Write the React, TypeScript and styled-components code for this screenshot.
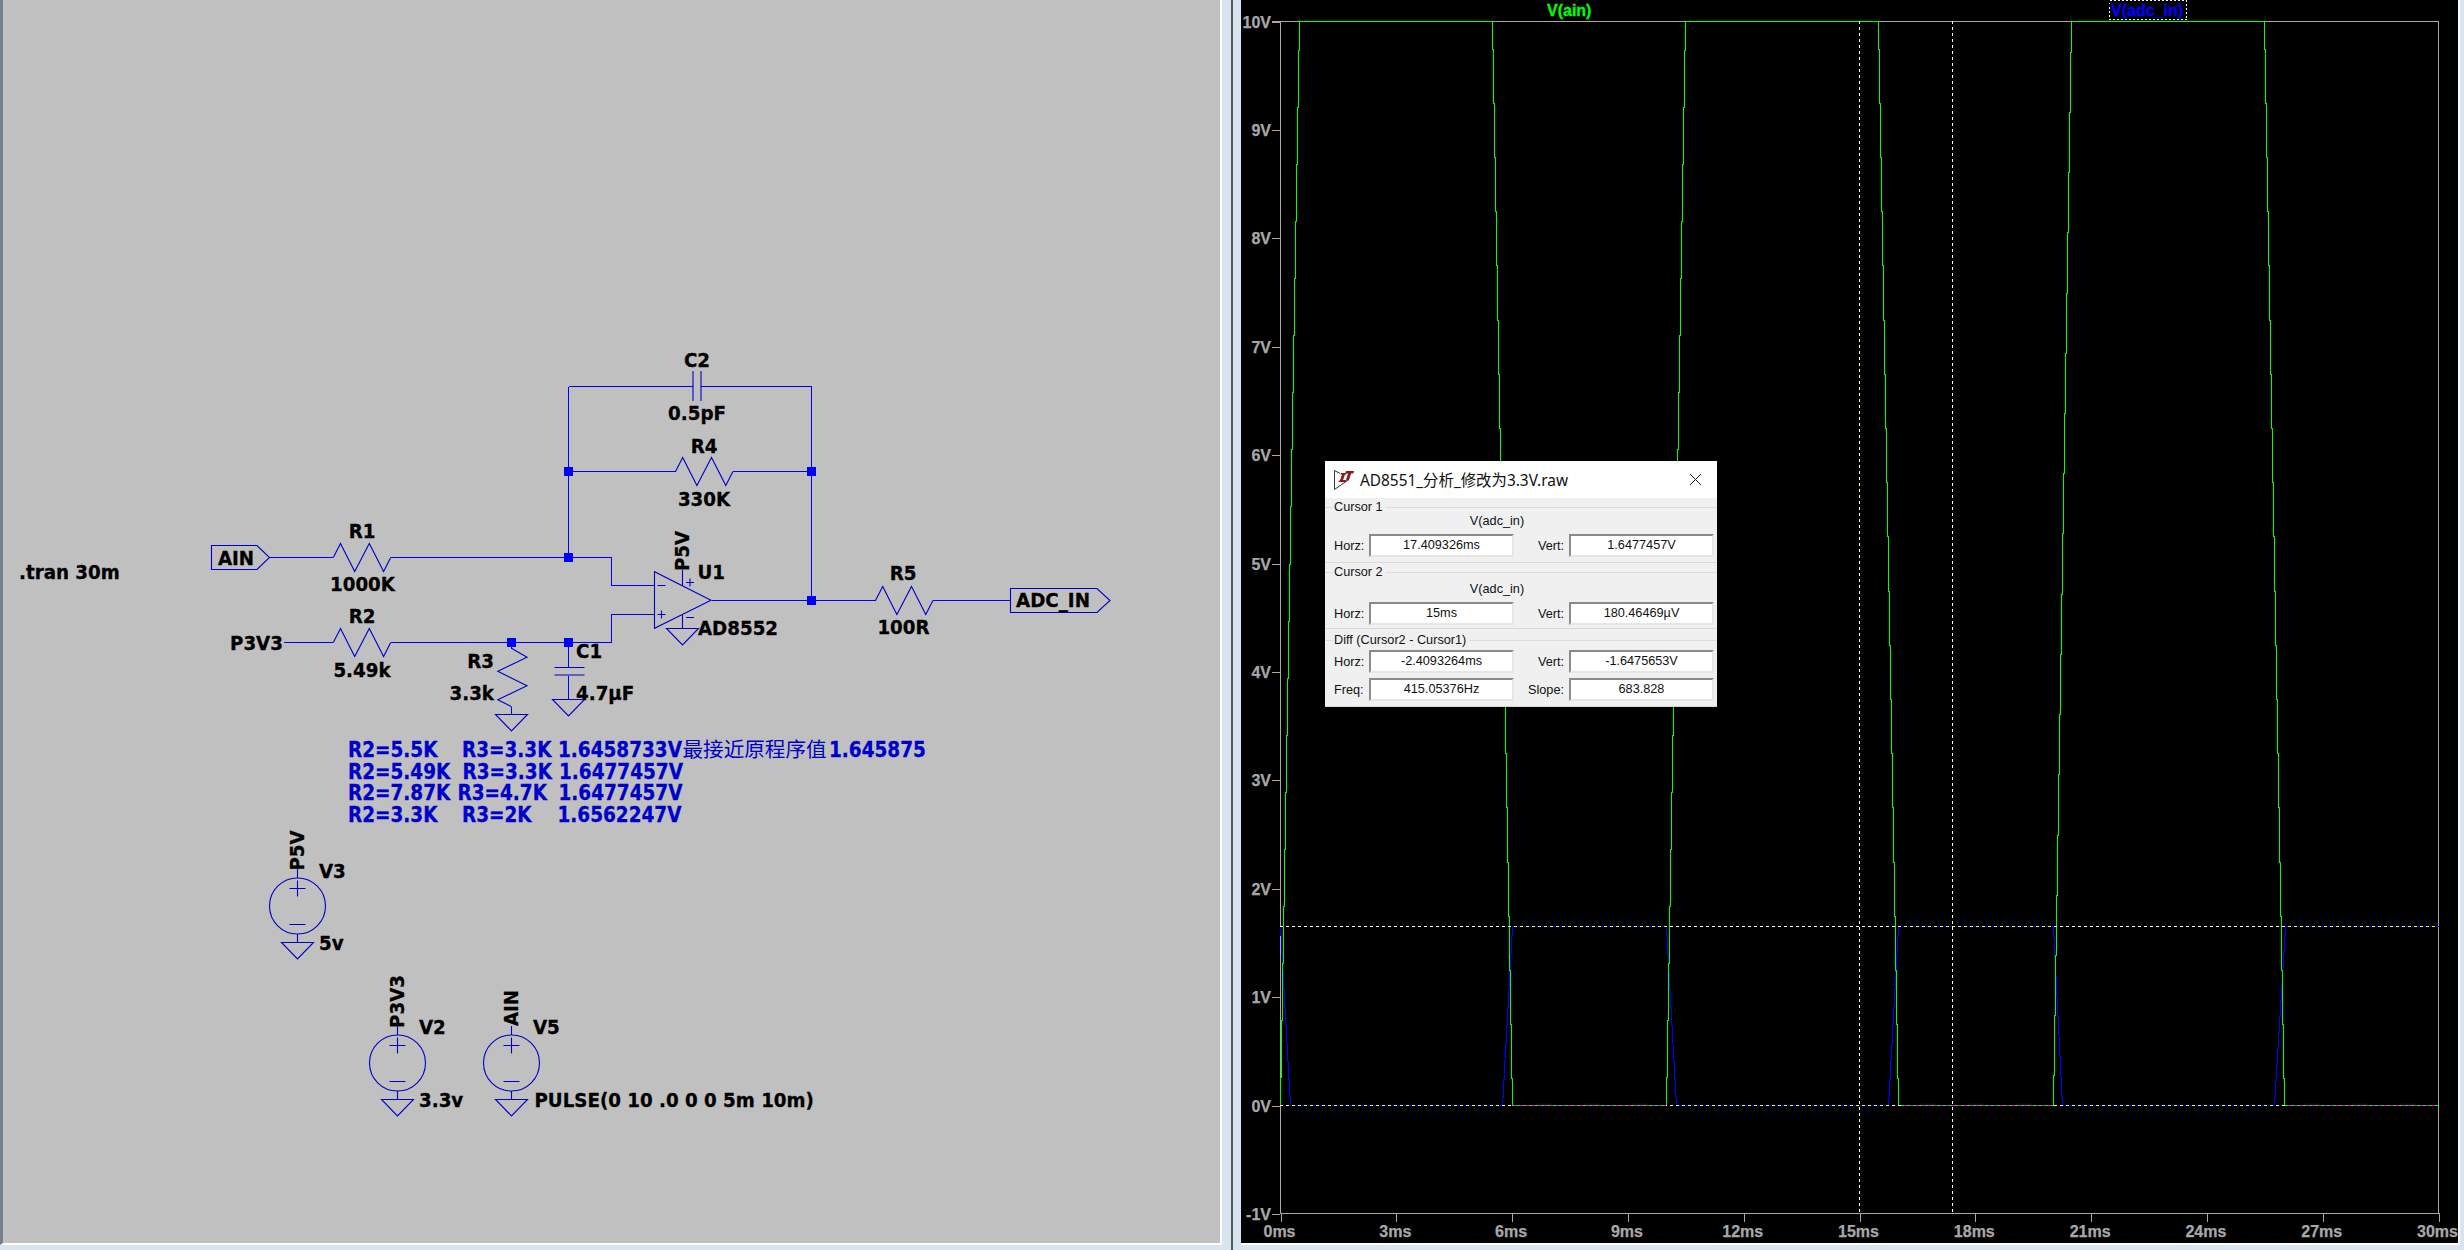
import React from "react";
import styled, { createGlobalStyle } from "styled-components";

const Global = createGlobalStyle`
  html, body { margin: 0; padding: 0; background: #d9e4f1; overflow: hidden; }
  #root { width: 2464px; height: 1250px; }
`;

const Window = styled.div`
  display: flex;
  align-items: flex-start;
  width: 2464px;
  height: 1250px;
  background: #d9e4f1;
`;
const SchematicPane = styled.div`
  box-sizing: border-box;
  width: 1222px;
  height: 1245px;
  background: #c0c0c0;
  border-left: 3px solid #76808c;
  border-right: 2px solid #fff;
  border-bottom: 2px solid #fff;
`;
const Splitter = styled.div`
  display: flex;
  justify-content: center;
  width: 19px;
  height: 1250px;
`;
const SplitLine = styled.div`
  width: 2px;
  height: 100%;
  background: #555;
`;
const PlotPane = styled.div`
  position: relative;
  box-sizing: content-box;
  width: 1217px;
  height: 1243px;
  background: #000;
  border-right: 2px solid #fff;
  border-bottom: 2px solid #fff;
`;
const Canvas = styled.svg`
  display: block;
`;
const Label = styled.text<{ $anchor?: string }>`
  font-family: "DejaVu Sans Condensed", "DejaVu Sans", sans-serif;
  font-stretch: condensed;
  font-weight: 700;
  font-size: 20.3px;
  fill: #000;
  stroke: #000;
  stroke-width: 0.3px;
  text-anchor: ${(p) => p.$anchor || "middle"};
`;
const Note = styled.text`
  font-family: "DejaVu Sans Condensed", "DejaVu Sans", sans-serif;
  font-stretch: condensed;
  font-weight: 700;
  font-size: 20.5px;
  fill: #0000cc;
  stroke: #0000cc;
  stroke-width: 0.3px;
`;
const NoteCjk = styled.text`
  font-family: "Noto Sans CJK SC", sans-serif;
  font-size: 20.6px;
  fill: #0000cc;
`;
const AxisLabel = styled.text<{ $anchor?: string }>`
  font-family: "Liberation Sans", Arial, sans-serif;
  font-weight: 700;
  font-size: 16px;
  fill: #a8a8a8;
  stroke: #a8a8a8;
  stroke-width: 0.25px;
  text-anchor: ${(p) => p.$anchor || "middle"};
`;
const TraceTitle = styled.text<{ $color: string }>`
  font-family: "Liberation Sans", Arial, sans-serif;
  font-weight: 700;
  font-size: 16px;
  fill: ${(p) => p.$color};
  stroke: ${(p) => p.$color};
  stroke-width: 0.3px;
`;
const Wire = styled.path`
  fill: none;
  stroke: #0000ff;
  stroke-width: 1px;
  shape-rendering: crispEdges;
`;
const Part = styled.path`
  fill: none;
  stroke: #0000c8;
  stroke-width: 1.1px;
`;
const SourceBody = styled.circle`
  fill: none;
  stroke: #0000c8;
  stroke-width: 1.1px;
`;
const Junction = styled.rect`
  fill: #0000ff;
`;
const Trace = styled.polyline<{ $color: string }>`
  fill: none;
  stroke: ${(p) => p.$color};
  stroke-width: 1px;
  shape-rendering: crispEdges;
`;
const Axis = styled.path`
  fill: none;
  stroke: #a8a8a8;
  stroke-width: 1px;
  shape-rendering: crispEdges;
`;
const Cursor = styled.path<{ $color: string }>`
  fill: none;
  stroke: ${(p) => p.$color};
  stroke-width: 1px;
  stroke-dasharray: 3 3;
  shape-rendering: crispEdges;
`;
const TraceFrame = styled.rect`
  fill: none;
  stroke: #fff;
  stroke-width: 1px;
  stroke-dasharray: 2 2;
  shape-rendering: crispEdges;
`;

const Dialog = styled.div`
  position: absolute;
  left: 84px;
  top: 461px;
  width: 392px;
  background: #f0f0f0;
  font-family: "Liberation Sans", Arial, sans-serif;
  font-size: 12.7px;
  color: #111;
`;
const TitleBar = styled.div`
  display: flex;
  align-items: center;
  height: 37px;
  padding: 0 15px 0 9px;
  background: #fff;
`;
const TitleText = styled.div`
  margin-left: 6px;
  flex: 1;
  font-family: "Noto Sans", "Noto Sans CJK SC", sans-serif;
  font-size: 15.4px;
  color: #111;
  white-space: nowrap;
`;
const Group = styled.div<{ $top: number; $bottom: number }>`
  padding: ${(p) => p.$top}px 0 ${(p) => p.$bottom}px;
  border-bottom: 1px solid #d8d8d8;
`;
const Legend = styled.div`
  display: flex;
  align-items: center;
  height: 14px;
`;
const LegendRule = styled.div<{ $fixed?: boolean }>`
  height: 1px;
  background: #dcdcdc;
  ${(p) => (p.$fixed ? "width: 8px;" : "flex: 1;")}
`;
const LegendText = styled.span`
  padding: 0 3px 0 1px;
`;
const TraceName = styled.div<{ $top: number }>`
  margin-top: ${(p) => p.$top}px;
  height: 14px;
  line-height: 14px;
  text-align: center;
  padding-right: 48px;
`;
const Row = styled.div<{ $top: number }>`
  display: grid;
  grid-template-columns: 35px 145px 55px 145px;
  align-items: center;
  margin-top: ${(p) => p.$top}px;
  padding-left: 9px;
`;
const FieldLabel = styled.div<{ $right?: boolean }>`
  text-align: ${(p) => (p.$right ? "right" : "left")};
  padding-right: ${(p) => (p.$right ? 5 : 0)}px;
`;
const Field = styled.div`
  box-sizing: border-box;
  height: 23px;
  line-height: 19px;
  background: #fff;
  text-align: center;
  border: 2px solid;
  border-color: #8a8a8a #e6e6e6 #e6e6e6 #8a8a8a;
`;

const X0 = 1280.5;
const PX_MS = (2438.5 - 1280.5) / 30;
const Y0 = 1105.5;
const PX_V = 108.4;
const xms = (m: number) => X0 + m * PX_MS;
const yv = (v: number) => Y0 - v * PX_V;
/* cursor overlays keep the phase of the white dashes, as an XOR pen would */
const phase = (x: number) => 1280 + Math.ceil((x - 1280) / 6) * 6;
const seg = (y: number, spans: [number, number][]) =>
  spans.map(([a, b]) => `M${phase(a)} ${y}H${b}`).join("");

type Pt = [number, number];
const green: Pt[] = [
  [1280.5, 1105.5], [1299.5, 21.5], [1492.5, 21.5], [1512.5, 1105.5], [1666.5, 1105.5],
  [1685.5, 21.5], [1878.5, 21.5], [1898.5, 1105.5], [2053.5, 1105.5], [2071.5, 21.5],
  [2264.5, 21.5], [2284.5, 1105.5], [2438.5, 1105.5],
];
const blue: Pt[] = [
  [1280.5, 926.5], [1290.5, 1105.5], [1502.5, 1105.5], [1512.5, 926.5], [1666.5, 926.5],
  [1676.5, 1105.5], [1888.5, 1105.5], [1898.5, 926.5], [2053.5, 926.5], [2062.5, 1105.5],
  [2274.5, 1105.5], [2285.5, 926.5], [2438.5, 926.5],
];
/* the plot draws its slopes as one-pixel columns with a jog between them */
const stairs = (a: Pt[]) => {
  const out: Pt[] = [a[0]];
  for (let i = 1; i < a.length; i++) {
    const [x0, y0] = a[i - 1];
    const [x1, y1] = a[i];
    if (y0 !== y1) {
      const n = Math.round(x1 - x0);
      for (let k = 1; k <= n; k++) {
        const y = Math.round(y0 + ((y1 - y0) * (k - 0.5)) / n) + 0.5;
        out.push([x0 + k - 1, y], [x0 + k, y]);
      }
    }
    out.push([x1, y1]);
  }
  return out.map((p) => p.join(",")).join(" ");
};

const Resistor = ({ x, y }: { x: number; y: number }) => (
  <Part d={`M${x} ${y}l7.2 -14l14.2 28l14.6 -28l14.3 28l7.1 -14`} />
);
const Ground = ({ x, y }: { x: number; y: number }) => (
  <Part d={`M${x - 16} ${y}h32l-16 16.4z`} />
);
const Node = ({ x, y }: { x: number; y: number }) => (
  <Junction x={x - 4.5} y={y - 4.5} width={9} height={9} />
);
const Source = ({ x, top }: { x: number; top: number }) => (
  <>
    <Part d={`M${x} ${top - 9}v9`} />
    <SourceBody cx={x} cy={top + 28} r={28} />
    <Part d={`M${x - 8} ${top + 10.5}h16M${x} ${top + 2.5}v16M${x - 8} ${top + 46.5}h16M${x} ${top + 56}v8`} />
    <Ground x={x} y={top + 64.5} />
  </>
);
const Up = ({ x, y, children }: { x: number; y: number; children: React.ReactNode }) => (
  <Label $anchor="middle" transform={`translate(${x + 7} ${y}) rotate(-90)`}>
    {children}
  </Label>
);

const Schematic = () => (
  <Canvas width={1217} height={1243} viewBox="3 0 1217 1243">
    <Wire d="M568.5 386.5H693M701 386.5H811.5V600.5M568.5 386.5V557.5M568.5 471.5H675.5M733 471.5H811.5" />
    <Wire d="M269.5 557.5H333M391 557.5H611.5V585.5H654.5" />
    <Wire d="M283.5 642.5H333M391 642.5H611.5V614.5H654.5" />
    <Wire d="M711.5 600.5H875.5M933 600.5H1010.5" />
    <Wire d="M511.5 642.5V648.5M568.5 642.5V667.5M568.5 675.5V699.5M511.5 706.5V714.5" />
    <Part d="M693 371v30M701 371v30M554.5 667.5h30M554.5 675h30" />
    <Part d="M654.5 571.7V628.3L711 600.3zM682.5 570V585.5M682.5 615V628.3" />
    <Part d="M657.5 585.5h8M657.5 614.5h8M661.5 610.5v8M686 582.5h8M690 578.5v8M686 617.5h8" />
    <Part d="M511.5 648.3L527 657.3L497.8 671.3L527 685.7L497.8 699.7L511.5 706.7" />
    <Part d="M211.5 545.5H257L269.5 557.5L257 569.5H211.5zM1010.5 588.5H1097L1110 600.5L1097 612.5H1010.5z" />
    <Resistor x={333.3} y={557.5} />
    <Resistor x={333.3} y={642.5} />
    <Resistor x={675.5} y={471.5} />
    <Resistor x={875.5} y={600.5} />
    <Ground x={511.5} y={714.5} />
    <Ground x={568.5} y={699.5} />
    <Ground x={682.5} y={628.5} />
    <Source x={297.5} top={878} />
    <Source x={397.5} top={1035} />
    <Source x={511.5} top={1035} />
    {[[568.5, 471.5], [811.5, 471.5], [568.5, 557.5], [811.5, 600.5], [511.5, 642.5], [568.5, 642.5]].map(([x, y]) => (
      <Node key={`${x}-${y}`} x={x} y={y} />
    ))}

    <Label x={19} y={578.5} $anchor="start">.tran 30m</Label>
    <Label x={236} y={564.5}>AIN</Label>
    <Label x={1053} y={607}>ADC_IN</Label>
    <Label x={256.5} y={649.5}>P3V3</Label>
    <Label x={362} y={538}>R1</Label>
    <Label x={362.5} y={591}>1000K</Label>
    <Label x={362} y={623}>R2</Label>
    <Label x={362} y={677}>5.49k</Label>
    <Label x={494} y={667.5} $anchor="end">R3</Label>
    <Label x={494} y={699.5} $anchor="end">3.3k</Label>
    <Label x={576} y={658} $anchor="start">C1</Label>
    <Label x={576} y={699.5} $anchor="start">4.7µF</Label>
    <Label x={697} y={367}>C2</Label>
    <Label x={697} y={419.5}>0.5pF</Label>
    <Label x={704} y={453}>R4</Label>
    <Label x={704} y={506}>330K</Label>
    <Label x={903} y={580}>R5</Label>
    <Label x={903.5} y={633.5}>100R</Label>
    <Label x={697.5} y={578.5} $anchor="start">U1</Label>
    <Label x={698} y={635} $anchor="start">AD8552</Label>
    <Up x={681.5} y={551}>P5V</Up>
    <Up x={296.5} y={850.5}>P5V</Up>
    <Up x={396.5} y={1001.5}>P3V3</Up>
    <Up x={510.5} y={1008}>AIN</Up>
    <Label x={319} y={878} $anchor="start">V3</Label>
    <Label x={319} y={950} $anchor="start">5v</Label>
    <Label x={419} y={1034} $anchor="start">V2</Label>
    <Label x={419} y={1106.5} $anchor="start">3.3v</Label>
    <Label x={533} y={1034} $anchor="start">V5</Label>
    <Label x={534.5} y={1106.5} $anchor="start">PULSE(0 10 .0 0 0 5m 10m)</Label>

    <Note x={348} y={757}>R2=5.5K</Note>
    <Note x={462} y={757}>R3=3.3K</Note>
    <Note x={558} y={757}>1.6458733V</Note>
    <NoteCjk x={682.5} y={757}>最接近原程序值</NoteCjk>
    <Note x={829} y={757}>1.645875</Note>
    <Note x={348} y={779}>R2=5.49K</Note>
    <Note x={462.5} y={779}>R3=3.3K</Note>
    <Note x={559} y={779}>1.6477457V</Note>
    <Note x={348} y={800}>R2=7.87K</Note>
    <Note x={457.5} y={800}>R3=4.7K</Note>
    <Note x={558.5} y={800}>1.6477457V</Note>
    <Note x={348} y={822}>R2=3.3K</Note>
    <Note x={462} y={822}>R3=2K</Note>
    <Note x={557.5} y={822}>1.6562247V</Note>
  </Canvas>
);

const Plot = () => (
  <Canvas width={1217} height={1243} viewBox="1241 0 1217 1243">
    <Axis d="M1280.5 21.5H2438.5V1213.5H1280.5zM1272 21.5h8" />
    {Array.from({ length: 12 }, (_, i) => 10 - i).map((v) => (
      <React.Fragment key={v}>
        <Axis d={`M1272 ${Math.round(yv(v)) + 0.5}h8`} />
        <AxisLabel x={1271} y={yv(v) + 6} $anchor="end">{v}V</AxisLabel>
      </React.Fragment>
    ))}
    {Array.from({ length: 11 }, (_, i) => i * 3).map((m) => (
      <React.Fragment key={m}>
        <Axis d={`M${Math.round(xms(m)) + 0.5} 1213v9`} />
        <AxisLabel x={xms(m) - 1} y={1237}>{m}ms</AxisLabel>
      </React.Fragment>
    ))}
    <Trace $color="#0000ff" points={stairs(blue)} />
    <Trace $color="#00ff00" points={stairs(green)} />
    <Cursor $color="#ffffff" d={`M1280 926.5H2438M1280 1105.5H2438`} />
    <Cursor
      $color="#ffff00"
      d={
        seg(926.5, [[1513, 1666], [1899, 2053], [2285, 2438]]) +
        seg(1105.5, [[1291, 1502], [1677, 1888], [2063, 2274]])
      }
    />
    <Cursor $color="#ff00ff" d={seg(1105.5, [[1513, 1666], [1899, 2053], [2285, 2438]])} />
    <Cursor $color="#ffffff" d="M1859.5 21V1213M1952.5 21V1213" />
    <TraceTitle $color="#00ff00" x={1547} y={16}>V(ain)</TraceTitle>
    <TraceTitle $color="#0000ff" x={2111} y={16}>V(adc_in)</TraceTitle>
    <TraceFrame x={2109.5} y={0.5} width={77} height={19} />
  </Canvas>
);

const LogoIcon = () => (
  <svg width={20} height={20} viewBox="0 0 20 20">
    <path d="M6 3.5L0.5 0.5V19.5L15 9.5" fill="none" stroke="#333" strokeWidth={1} />
    <path d="M7 3h5.5l-.5 1.5h-1L9 10h3.5L12 12H4.5l.5-1.5h1L8 4.5H6.5z" fill="#8c1a1a" />
    <path d="M12 1h8l-.7 2.5h-2.2L15 10h-3l2.1-6.5H11.3z" fill="#8c1a1a" />
  </svg>
);

const FieldRow = ({ top, a, b, c = "Horz:", d = "Vert:" }: { top: number; a: string; b: string; c?: string; d?: string }) => (
  <Row $top={top}>
    <FieldLabel>{c}</FieldLabel>
    <Field>{a}</Field>
    <FieldLabel $right>{d}</FieldLabel>
    <Field>{b}</Field>
  </Row>
);
const LegendLine = ({ children }: { children: React.ReactNode }) => (
  <Legend>
    <LegendRule $fixed />
    <LegendText>{children}</LegendText>
    <LegendRule />
  </Legend>
);

const CursorDialog = () => (
  <Dialog>
    <TitleBar>
      <LogoIcon />
      <TitleText>AD8551_分析_修改为3.3V.raw</TitleText>
      <svg width={13} height={13} viewBox="0 0 13 13">
        <path d="M1 1L12 12M12 1L1 12" stroke="#222" strokeWidth={1} fill="none" />
      </svg>
    </TitleBar>
    <Group $top={2} $bottom={5}>
      <LegendLine>Cursor 1</LegendLine>
      <TraceName $top={0}>V(adc_in)</TraceName>
      <FieldRow top={6} a="17.409326ms" b="1.6477457V" />
    </Group>
    <Group $top={2} $bottom={3}>
      <LegendLine>Cursor 2</LegendLine>
      <TraceName $top={3}>V(adc_in)</TraceName>
      <FieldRow top={6} a="15ms" b="180.46469µV" />
    </Group>
    <Group $top={4} $bottom={5}>
      <LegendLine>Diff (Cursor2 - Cursor1)</LegendLine>
      <FieldRow top={3} a="-2.4093264ms" b="-1.6475653V" />
      <FieldRow top={5} a="415.05376Hz" b="683.828" c="Freq:" d="Slope:" />
    </Group>
  </Dialog>
);

export default function App() {
  return (
    <Window>
      <Global />
      <SchematicPane>
        <Schematic />
      </SchematicPane>
      <Splitter>
        <SplitLine />
      </Splitter>
      <PlotPane>
        <Plot />
        <CursorDialog />
      </PlotPane>
    </Window>
  );
}
